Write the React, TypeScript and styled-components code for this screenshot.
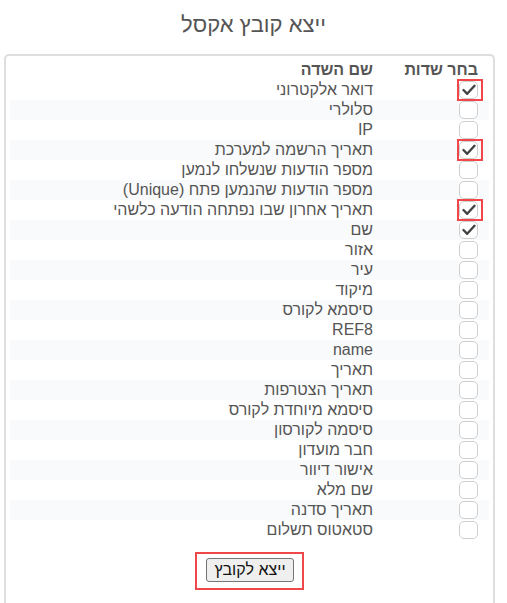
import React, { useState } from 'react';
import styled, { createGlobalStyle } from 'styled-components';

const GlobalStyle = createGlobalStyle`
  html, body {
    margin: 0;
    padding: 0;
    background: #ffffff;
  }
  body {
    font-family: 'Liberation Sans', Arial, 'DejaVu Sans', sans-serif;
    color: #555555;
  }
`;

const Page = styled.div`
  direction: rtl;
  display: flex;
  flex-direction: column;
  height: 603px;
  overflow: hidden;
`;

const Title = styled.h2`
  margin: 0;
  padding: 12px 0 0;
  height: 44px;
  box-sizing: border-box;
  text-align: center;
  font-size: 22px;
  font-weight: 500;
  color: #555555;
`;

const Panel = styled.div`
  margin: 10px 12px 0 4px;
  flex: 1;
  border: 2px solid #dedede;
  border-bottom: none;
  border-radius: 5px 5px 0 0;
  padding: 4px 4px 0;
  display: flex;
  flex-direction: column;
  align-items: stretch;
`;

const Row = styled.div<{ $striped?: boolean; $head?: boolean }>`
  display: grid;
  grid-template-columns: 105px 1fr;
  height: 20px;
  align-items: center;
  background: ${({ $striped }) => ($striped ? '#f9fafc' : 'transparent')};
  font-size: 16px;
  font-weight: ${({ $head }) => ($head ? 700 : 400)};
  line-height: 20px;
`;

const Cell = styled.div`
  padding-right: 11px;
  display: flex;
  align-items: center;
  white-space: nowrap;
`;

const Box = styled.span<{ $marked?: boolean }>`
  position: relative;
  display: inline-flex;
  align-items: center;
  justify-content: center;
  width: 17px;
  height: 16px;
  border: 1px solid #cfcfcf;
  border-radius: 5px;
  background: #ffffff;
  cursor: pointer;

  &::after {
    content: '';
    display: ${({ $marked }) => ($marked ? 'block' : 'none')};
    position: absolute;
    top: -3px;
    bottom: -3px;
    right: -6px;
    left: -3px;
    border: 2px solid #f0474b;
  }
`;

const Actions = styled.div`
  display: flex;
  justify-content: center;
  padding-top: 12px;
`;

const Marker = styled.div`
  border: 2px solid #f0474b;
  padding: 4px 8px 6px 9px;
`;

const Button = styled.button`
  font-family: 'Liberation Sans', Arial, sans-serif;
  font-size: 16px;
  color: #111111;
  background: #efefef;
  border: 1px solid #767676;
  border-radius: 3px;
  height: 24px;
  padding: 0 7px;
  line-height: 20px;
`;

const Check = () => (
  <svg width="14" height="12" viewBox="0 0 14 12">
    <path d="M1.5 6 L5.2 9.8 L12.5 1.8" fill="none" stroke="#444" strokeWidth="2.4" strokeLinecap="round" strokeLinejoin="round" />
  </svg>
);

const fields = [
  { name: 'דואר אלקטרוני', on: true, mark: true },
  { name: 'סלולרי' },
  { name: 'IP' },
  { name: 'תאריך הרשמה למערכת', on: true, mark: true },
  { name: 'מספר הודעות שנשלחו לנמען' },
  { name: 'מספר הודעות שהנמען פתח (Unique)' },
  { name: 'תאריך אחרון שבו נפתחה הודעה כלשהי', on: true, mark: true },
  { name: 'שם', on: true },
  { name: 'אזור' },
  { name: 'עיר' },
  { name: 'מיקוד' },
  { name: 'סיסמא לקורס' },
  { name: 'REF8' },
  { name: 'name' },
  { name: 'תאריך' },
  { name: 'תאריך הצטרפות' },
  { name: 'סיסמא מיוחדת לקורס' },
  { name: 'סיסמה לקורסון' },
  { name: 'חבר מועדון' },
  { name: 'אישור דיוור' },
  { name: 'שם מלא' },
  { name: 'תאריך סדנה' },
  { name: 'סטאטוס תשלום' }
];

function App() {
  const [checked, setChecked] = useState<boolean[]>(fields.map((f) => !!f.on));

  const toggle = (i: number) => {
    setChecked((prev) => prev.map((v, j) => (j === i ? !v : v)));
  };

  return (
    <Page>
      <GlobalStyle />
      <Title>ייצא קובץ אקסל</Title>
      <Panel>
        <Row $head>
          <Cell>בחר שדות</Cell>
          <Cell>שם השדה</Cell>
        </Row>
        {fields.map((f, i) => (
          <Row key={f.name} $striped={i % 2 === 1}>
            <Cell>
              <Box $marked={f.mark} onClick={() => toggle(i)}>
                {checked[i] && <Check />}
              </Box>
            </Cell>
            <Cell>{f.name}</Cell>
          </Row>
        ))}
        <Actions>
          <Marker>
            <Button>ייצא לקובץ</Button>
          </Marker>
        </Actions>
      </Panel>
    </Page>
  );
}

export default App;
